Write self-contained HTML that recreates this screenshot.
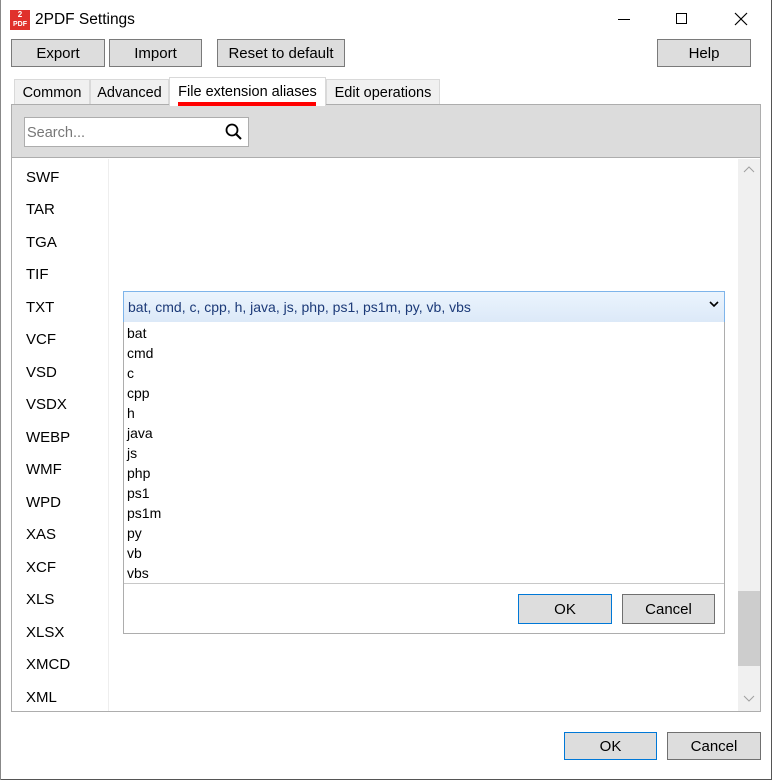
<!DOCTYPE html>
<html><head><style>
*{box-sizing:border-box;margin:0;padding:0}
body{width:772px;height:780px;background:#fff;font-family:"Liberation Sans",sans-serif;font-size:15px;color:#000;position:relative;overflow:hidden}
.a{position:absolute}
.btn{position:absolute;background:#dddddd;border:1px solid #7a7a7a;text-align:center;font-size:15px;line-height:27px}
.tab{position:absolute;background:#f0f0f0;border:1px solid #d9d9d9;border-bottom:none;font-size:14.5px;line-height:26px;text-align:center}
.it{position:absolute;left:26px;font-size:15px}
.li{position:absolute;left:127px;font-size:14px}
</style></head><body>
<div class="a" style="left:771px;top:0;width:1px;height:780px;background:#555"></div>
<div class="a" style="left:0;top:779px;width:772px;height:1px;background:#555"></div>
<div class="a" style="left:0;top:0;width:1px;height:780px;background:#888"></div>
<div class="a" style="left:10px;top:10px;width:20px;height:20px;background:#e0312c;color:#fff;font-size:8px;line-height:9px;text-align:center;font-weight:bold">2<br><span style="font-size:7px">PDF</span></div>
<div class="a" style="left:35px;top:11px;font-size:15.5px">2PDF Settings</div>
<div class="a" style="left:618px;top:19px;width:12px;height:1px;background:#000"></div>
<div class="a" style="left:676px;top:13px;width:11px;height:11px;border:1px solid #000"></div>
<svg class="a" style="left:734px;top:12px" width="14" height="14"><path d="M1 1L13 13M13 1L1 13" stroke="#000" stroke-width="1.2"/></svg>

<div class="btn" style="left:11px;top:39px;width:94px;height:28px">Export</div>
<div class="btn" style="left:109px;top:39px;width:93px;height:28px">Import</div>
<div class="btn" style="left:217px;top:39px;width:128px;height:28px">Reset to default</div>
<div class="btn" style="left:657px;top:39px;width:94px;height:28px">Help</div>

<div class="tab" style="left:14px;top:79px;width:76px;height:26px">Common</div>
<div class="tab" style="left:90px;top:79px;width:79px;height:26px">Advanced</div>
<div class="tab" style="left:326px;top:79px;width:114px;height:26px">Edit operations</div>

<div class="a" style="left:11px;top:104px;width:750px;height:608px;border:1px solid #adadad;background:#fff"></div>
<div class="a" style="left:12px;top:105px;width:748px;height:53px;background:#dcdcdc;border-bottom:1px solid #adadad"></div>
<div class="tab" style="left:169px;top:77px;width:157px;height:29px;background:#fff;border-color:#d9d9d9;line-height:29px">File extension aliases</div>
<div class="a" style="left:178px;top:102px;width:138px;height:4px;background:#f00"></div>

<div class="a" style="left:24px;top:117px;width:225px;height:30px;background:#fff;border:1px solid #adadad"></div>
<div class="a" style="left:27px;top:125px;color:#777;font-size:14.5px">Search...</div>
<svg class="a" style="left:225px;top:123px" width="18" height="18"><circle cx="7" cy="7" r="5.5" fill="none" stroke="#000" stroke-width="1.8"/><path d="M11 11L16 16" stroke="#000" stroke-width="2"/></svg>

<div class="a" style="left:108px;top:159px;width:1px;height:552px;background:#eee"></div>
<div class="it" style="top:169px">SWF</div>
<div class="it" style="top:201px">TAR</div>
<div class="it" style="top:234px">TGA</div>
<div class="it" style="top:266px">TIF</div>
<div class="it" style="top:299px">TXT</div>
<div class="it" style="top:331px">VCF</div>
<div class="it" style="top:364px">VSD</div>
<div class="it" style="top:396px">VSDX</div>
<div class="it" style="top:429px">WEBP</div>
<div class="it" style="top:461px">WMF</div>
<div class="it" style="top:494px">WPD</div>
<div class="it" style="top:526px">XAS</div>
<div class="it" style="top:559px">XCF</div>
<div class="it" style="top:591px">XLS</div>
<div class="it" style="top:624px">XLSX</div>
<div class="it" style="top:656px">XMCD</div>
<div class="it" style="top:689px">XML</div>

<div class="a" style="left:738px;top:159px;width:22px;height:552px;background:#f0f0f0"></div>
<div class="a" style="left:738px;top:591px;width:22px;height:75px;background:#cdcdcd"></div>
<svg class="a" style="left:743px;top:166px" width="12" height="8"><path d="M1 6L6 1L11 6" fill="none" stroke="#a0a0a0"/></svg>
<svg class="a" style="left:743px;top:695px" width="12" height="8"><path d="M1 1L6 6L11 1" fill="none" stroke="#a0a0a0"/></svg>

<div class="a" style="left:123px;top:291px;width:602px;height:32px;border:1px solid #7eb4ea;background:linear-gradient(#ebf4fd,#dce9f8)"></div>
<div class="a" style="left:128px;top:299px;color:#1c3a78;font-size:14px">bat, cmd, c, cpp, h, java, js, php, ps1, ps1m, py, vb, vbs</div>
<svg class="a" style="left:709px;top:301px" width="10" height="7"><path d="M1 1L5 5L9 1" fill="none" stroke="#000" stroke-width="1.6"/></svg>
<div class="a" style="left:123px;top:322px;width:602px;height:312px;border:1px solid #adadad;border-top:none;background:#fff"></div>
<div class="a" style="left:124px;top:583px;width:600px;height:1px;background:#c8c8c8"></div>
<div class="li" style="top:325px">bat</div>
<div class="li" style="top:345px">cmd</div>
<div class="li" style="top:365px">c</div>
<div class="li" style="top:385px">cpp</div>
<div class="li" style="top:405px">h</div>
<div class="li" style="top:425px">java</div>
<div class="li" style="top:445px">js</div>
<div class="li" style="top:465px">php</div>
<div class="li" style="top:485px">ps1</div>
<div class="li" style="top:505px">ps1m</div>
<div class="li" style="top:525px">py</div>
<div class="li" style="top:545px">vb</div>
<div class="li" style="top:565px">vbs</div>
<div class="btn" style="left:518px;top:594px;width:94px;height:30px;border-color:#0078d7;line-height:30px">OK</div>
<div class="btn" style="left:622px;top:594px;width:93px;height:30px;border-color:#707070;line-height:30px">Cancel</div>

<div class="btn" style="left:564px;top:732px;width:93px;height:28px;border-color:#0078d7">OK</div>
<div class="btn" style="left:667px;top:732px;width:94px;height:28px;border-color:#707070">Cancel</div>
</body></html>
